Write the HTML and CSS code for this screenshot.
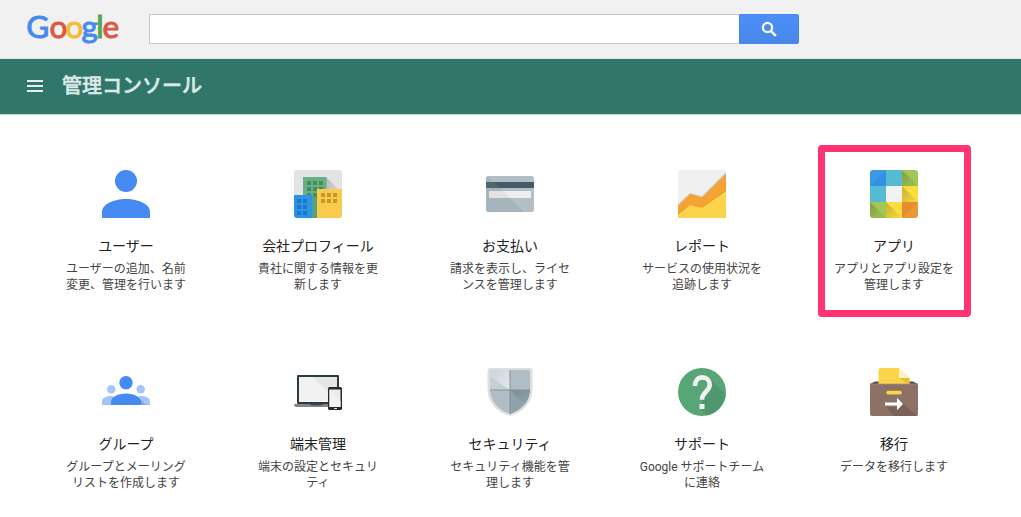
FILE: index.html
```html
<!DOCTYPE html>
<html lang="ja">
<head>
<meta charset="utf-8">
<title>管理コンソール</title>
<link rel="stylesheet" href="styles.css">
</head>
<body>
<header class="topbar">
  <svg class="logo" width="96" height="40" viewBox="0 0 96 40" role="img" aria-label="Google">
    <text class="logo-text" y="28"><tspan class="blue" x="0.3">G</tspan><tspan class="red" x="23.4">o</tspan><tspan class="yellow" x="39.4">o</tspan><tspan class="blue" x="55.6">g</tspan><tspan class="green" x="70.2">l</tspan><tspan class="red" x="76.600">e</tspan></text>
  </svg>
  <form class="search">
    <input class="search-input" type="text" aria-label="検索">
    <button class="search-button" type="button" aria-label="検索">
      <svg width="16" height="16" viewBox="0 0 16 16"><circle cx="6.500" cy="6.500" r="4.600" fill="none" stroke="#fff" stroke-width="2.200"/><path d="M9.800 9.800l5 5" stroke="#fff" stroke-width="2.600"/></svg>
    </button>
  </form>
</header>
<nav class="titlebar">
  <svg class="menu" width="16" height="12" viewBox="0 0 16 12"><path d="M0 0h16v2H0zM0 5h16v2H0zM0 10h16v2H0z" fill="#e6efed"/></svg>
  <h1 class="page-title">管理コンソール</h1>
</nav>
<main class="grid">
  <a class="tile">
    <svg class="icon" viewBox="0 0 48 48"><circle cx="24" cy="11" r="11" fill="#448af0"/><path d="M0 48v-6c0-8 12-13 24-13s24 5 24 13v6z" fill="#448af0"/></svg>
    <h2 class="name">ユーザー</h2>
    <p class="desc">ユーザーの追加、名前<br>変更、管理を行います</p>
  </a>
  <a class="tile">
    <svg class="icon" viewBox="0 0 48 48">
      <defs><clipPath id="company"><rect width="48" height="48" rx="3"/></clipPath><linearGradient id="shade" x1="0" y1="0" x2="1" y2="1"><stop offset="0" stop-color="#b9b9b9"/><stop offset="1" stop-color="#e3e3e3"/></linearGradient></defs>
      <g clip-path="url(#company)"><path d="M0 0h48v48H0z" fill="#e3e3e3"/><path d="M32 7l16 16v10H32z" fill="url(#shade)"/><path d="M9 7h23.500v41H9z" fill="#69af85"/><path d="M18 26h5v22h-5z" fill="#4f9873" opacity=".6"/>
      <path d="M13 11h4v4h-4zM19 11h4v4h-4zM25 11h4v4h-4zM13 17h4v4h-4zM19 17h4v4h-4zM25 17h4v4h-4zM13 23h4v4h-4zM19 23h4v4h-4z" fill="#438f59"/>
      <path d="M0 25h18v23H0z" fill="#2994e9"/><path d="M3 29h4v4H3zM9 29h4v4H9zM3 35h4v4H3zM9 35h4v4H9zM3 41h4v4H3zM9 41h4v4H9z" fill="#2377bd"/>
      <path d="M23 19h25v29H23z" fill="#f9ca4c"/><path d="M27 23h4v4h-4zM33 23h4v4h-4zM39 23h4v4h-4zM27 29h4v4h-4zM33 29h4v4h-4zM39 29h4v4h-4z" fill="#c99726"/></g>
    </svg>
    <h2 class="name">会社プロフィール</h2>
    <p class="desc">貴社に関する情報を更<br>新します</p>
  </a>
  <a class="tile">
    <svg class="icon" viewBox="0 0 48 48"><rect y="6" width="48" height="36" rx="2.500" fill="#b2bfc5"/><path d="M0 12h48v6H0z" fill="#455a64"/><path d="M3 15h42v7H3z" fill="none"/><path d="M3 21h42v7H3z" fill="#eee"/><path d="M2 6l36 36H2a2 2 0 0 1-2-2V8a2 2 0 0 1 2-2z" fill="#78909c" opacity=".2"/><path d="M3 21h14l7 7H3z" fill="#e2e2e2"/></svg>
    <h2 class="name">お支払い</h2>
    <p class="desc">請求を表示し、ライセ<br>ンスを管理します</p>
  </a>
  <a class="tile">
    <svg class="icon" viewBox="0 0 48 48">
      <defs><clipPath id="report"><rect width="48" height="48" rx="3"/></clipPath></defs>
      <g clip-path="url(#report)"><path d="M0 0h48v48H0z" fill="#f0f0f0"/><path d="M0 34l12-11 12 3L48 2v3L24 29l-12-3L0 37z" fill="#b8b4b0" opacity=".6"/><path d="M0 36l12-12 12 3.500L48 4v44H0z" fill="#f4a334"/><path d="M0 43l12-8.500L24 37l24-17v28H0z" fill="#d68a22" opacity=".6"/><path d="M0 44.500L12 35l12 2.700L48 21v27H0z" fill="#fad44b"/></g>
    </svg>
    <h2 class="name">レポート</h2>
    <p class="desc">サービスの使用状況を<br>追跡します</p>
  </a>
  <a class="tile tile-highlighted">
    <svg class="icon" viewBox="0 0 48 48">
      <defs><clipPath id="apps"><rect width="48" height="48" rx="3"/></clipPath>
      <linearGradient id="fold" x1="0" y1="0" x2="1" y2="1"><stop offset="0" stop-color="#000" stop-opacity=".2"/><stop offset="1" stop-color="#000" stop-opacity=".02"/></linearGradient></defs>
      <g clip-path="url(#apps)"><path d="M0 0h16v16H0z" fill="#3b98e8"/><path d="M16 0h16v16H16zM0 16h16v16H0z" fill="#56bad1"/><path d="M32 0h16v16H32zM0 32h16v16H0z" fill="#a3c654"/><path d="M16 16h16v16H16z" fill="#f1f1f1"/><path d="M32 16h16v16H32zM16 32h16v16H16z" fill="#fade3d"/><path d="M32 32h16v16H32z" fill="#ea9735"/><path d="M16 0v16H0z" fill="#2682db" opacity=".35"/>
      <path d="M32 0l16 16H32z" fill="url(#fold)"/><path d="M32 16l16 16H32z" fill="url(#fold)"/><path d="M0 32l16 16H0z" fill="url(#fold)"/><path d="M16 32l16 16H16z" fill="url(#fold)"/><path d="M32 32h16L32 48z" fill="#e18429" opacity=".5"/></g>
    </svg>
    <h2 class="name">アプリ</h2>
    <p class="desc">アプリとアプリ設定を<br>管理します</p>
  </a>
  <a class="tile">
    <svg class="icon" viewBox="0 0 48 48"><g fill="#a5c5f8"><circle cx="9.300" cy="21.300" r="4.200"/><circle cx="38.700" cy="21.300" r="4.200"/><path d="M0 37v-4c0-4 6-5.500 11-5l3 9zM48 37v-4c0-4-6-5.500-11-5l-3 9z"/></g><path d="M38 31l6 6h-6z" fill="#86a7dc"/><circle cx="24" cy="14.700" r="6.700" fill="#448af0"/><path d="M9 37v-3c0-5 7-8.500 15-8.500S39 29 39 34v3z" fill="#448af0"/></svg>
    <h2 class="name">グループ</h2>
    <p class="desc">グループとメーリング<br>リストを作成します</p>
  </a>
  <a class="tile">
    <svg class="icon" viewBox="0 0 48 48"><rect x="3" y="7" width="42" height="29" rx="1" fill="#2b3b41"/><path d="M5 9h38v25H5z" fill="#e6e6e6"/><path d="M5 9h13l25 22v3H5z" fill="#f2f2f2"/><path d="M0 36h36v3H2.500Q0 39 0 36z" fill="#858585"/><path d="M16 35.500h13v1.300q-6.500 1.500-13 0z" fill="#34474d"/><rect x="34" y="19" width="14" height="23" rx="1.500" fill="#292929"/><path d="M35.500 21.500h11V39h-11z" fill="#eaeaea"/><path d="M35.500 21.500L46.500 33v6h-11z" fill="#f3f3f3"/><path d="M40 40h3v1h-3z" fill="#ddd"/></svg>
    <h2 class="name">端末管理</h2>
    <p class="desc">端末の設定とセキュリ<br>ティ</p>
  </a>
  <a class="tile">
    <svg class="icon" viewBox="0 0 48 48">
      <defs><clipPath id="shield"><path d="M5.500 2h37q1.500 0 1.500 2v17c0 12-8.500 21-20 25C12.500 42 4 33 4 21V4q0-2 1.500-2z"/></clipPath><linearGradient id="steel" x1="0" y1="0" x2="1" y2="1"><stop offset="0" stop-color="#687e89"/><stop offset="1" stop-color="#9aabb3"/></linearGradient><linearGradient id="sheen" x1="0" y1="0" x2="1" y2="1"><stop offset="0" stop-color="#c6d0d4"/><stop offset="1" stop-color="#e4eaec"/></linearGradient></defs>
      <path d="M4 0h40q2.500 0 2.500 3v18c0 13-9 23-22.500 27C10.500 44 1.500 34 1.500 21V3Q1.500 0 4 0z" fill="#dedede"/>
      <g clip-path="url(#shield)"><path d="M0 0h48v48H0z" fill="#b0bdc4"/><path d="M0 0h24v22L2 8z" fill="url(#sheen)"/><path d="M2 8v14h22z" fill="#c6d0d5"/><path d="M24 22h24v26H24z" fill="#90a2ab"/><path d="M24 22h24v17H41z" fill="url(#steel)" opacity=".55"/><path d="M23.500 0h1v48h-1zM0 21.600h48v1H0z" fill="#82939b"/></g>
    </svg>
    <h2 class="name">セキュリティ</h2>
    <p class="desc">セキュリティ機能を管<br>理します</p>
  </a>
  <a class="tile">
    <svg class="icon" viewBox="0 0 48 48">
      <defs><clipPath id="help"><circle cx="24" cy="24" r="24"/></clipPath></defs>
      <g clip-path="url(#help)"><path d="M0 0h48v48H0z" fill="#58a676"/><path d="M31 10l20 20v22H33L22 41l5-16 5-5z" fill="#4c9169" opacity=".75"/></g>
      <path d="M17 18c0-5 3-8.600 7.300-8.600s7.400 3 7.400 7.300c0 6.800-7.700 7.300-7.700 15" fill="none" stroke="#f1f1f1" stroke-width="4.600"/><path d="M21.500 36h5v5h-5z" fill="#f1f1f1"/>
    </svg>
    <h2 class="name">サポート</h2>
    <p class="desc">Google サポートチーム<br>に連絡</p>
  </a>
  <a class="tile">
    <svg class="icon" viewBox="0 0 48 48"><path d="M0 16l5-2.500h38l5 2.500v3H0z" fill="#5c463e"/><path d="M8.500 17V2Q8.500 0 10.500 0H29l10.500 10v7z" fill="#fad44b"/><path d="M29 0l10.500 10H29z" fill="#fdf2c0"/><path d="M29 10h10.500v7z" fill="#e7bd3c"/><path d="M0 16h48v30q0 2-2 2H2q-2 0-2-2z" fill="#8d7066"/><path d="M27 30l6 6 15 12H24l-8-9h11z" fill="#765d54" opacity=".75"/><path d="M0 16h48" stroke="#9b9684" stroke-width=".7"/><rect x="16" y="22.500" width="16" height="4.200" rx="2" fill="#f9d64b" stroke="#79834e" stroke-width=".5"/><path d="M15 34.500h12v-4.800l6 6.300-6 6.300v-4.800H15z" fill="#fff"/></svg>
    <h2 class="name">移行</h2>
    <p class="desc">データを移行します</p>
  </a>
</main>
</body>
</html>
```
FILE: styles.css
```css
* { box-sizing: border-box; }

body {
  margin: 0;
  background: #fff;
  color: #222;
  font-family: Roboto, "Noto Sans CJK JP", sans-serif;
}

.topbar {
  display: flex;
  align-items: flex-start;
  height: 59px;
  padding: 10px 0 0 26px;
  background: #f1f1f1;
  border-bottom: 1px solid #e0e3e2;
}

.logo { flex: none; margin-right: 27px; overflow: visible; }
.logo-text { font: 400 31.5px Lato, sans-serif; stroke-width: 1px; }
.blue { fill: #448af0; stroke: #448af0; }
.red { fill: #dc5844; stroke: #dc5844; }
.yellow { fill: #f6bc32; stroke: #f6bc32; }
.green { fill: #57a550; stroke: #57a550; }

.search { display: flex; margin: 4px 0 0; }

.search-input {
  width: 590px;
  height: 30px;
  padding: 0 8px;
  border: 1px solid #c8c8c8;
  border-right: 0;
  background: #fff;
}

.search-button {
  display: flex;
  align-items: center;
  justify-content: center;
  width: 60px;
  height: 30px;
  padding: 0;
  border: 1px solid #4387f5;
  border-radius: 0 2px 2px 0;
  background: linear-gradient(#4a8ff8, #4a88e9);
}

.titlebar {
  display: flex;
  align-items: center;
  gap: 19px;
  height: 56px;
  padding-left: 27px;
  background: #30766a;
  border-bottom: 1px solid #c9d5d2;
}

.menu { margin-bottom: 2px; }

.page-title {
  margin: 0 0 2px;
  color: #dceae7;
  font-size: 20px;
  font-weight: 500;
  line-height: 28px;
  -webkit-text-stroke: .5px #dceae7;
}

.grid {
  display: grid;
  grid-template-columns: repeat(5, 192px);
  grid-template-rows: 198px auto;
  padding: 55px 0 0 30px;
}

.tile {
  position: relative;
  display: flex;
  flex-direction: column;
  align-items: center;
  text-align: center;
}

.tile-highlighted::after {
  content: "";
  position: absolute;
  top: -25px;
  left: 20px;
  box-sizing: border-box;
  width: 153px;
  height: 172px;
  border: 7px solid #ff3471;
  border-radius: 4px;
}

.icon { width: 48px; height: 48px; }

.name {
  margin: 18px 0 5px;
  font-size: 14px;
  font-weight: 400;
  line-height: 20px;
}

.desc {
  margin: 0;
  color: #444;
  font-size: 12px;
  line-height: 16px;
  white-space: nowrap;
}
```
